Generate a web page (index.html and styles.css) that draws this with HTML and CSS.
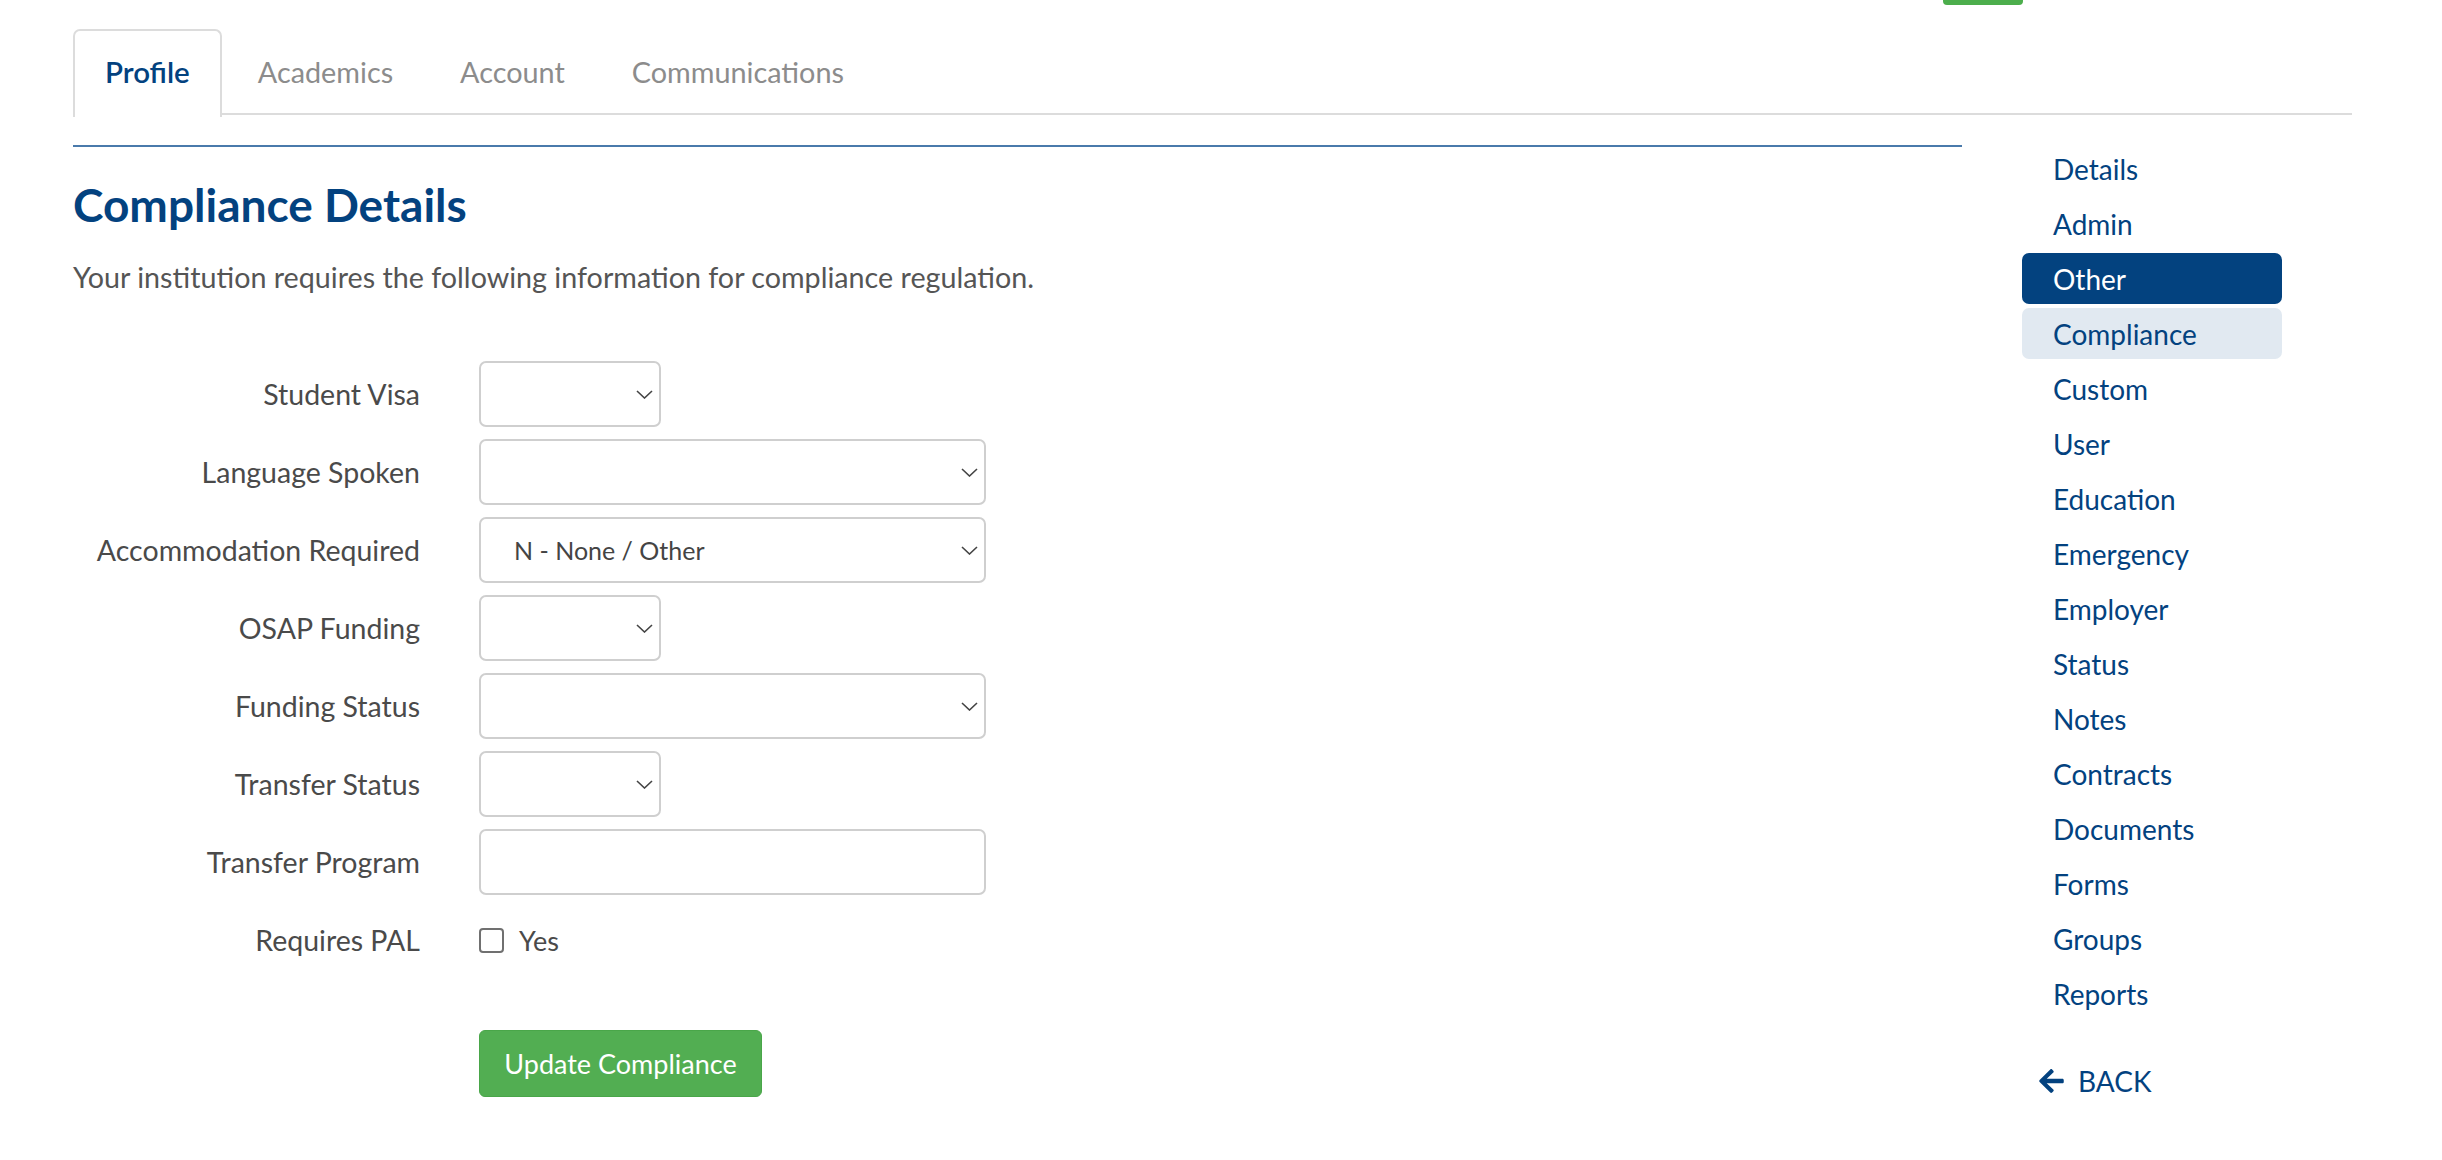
FILE: index.html
```html
<!DOCTYPE html>
<html lang="en">
<head>
<meta charset="utf-8">
<title>Compliance Details</title>
<link rel="stylesheet" href="styles.css">
</head>
<body>
<div class="page">
  <div class="topbar"><span class="green-stub"></span></div>
  <ul class="tabs">
    <li class="tab active">Profile</li>
    <li class="tab">Academics</li>
    <li class="tab">Account</li>
    <li class="tab">Communications</li>
  </ul>
  <div class="main">
    <div class="content">
      <h1 class="title">Compliance Details</h1>
      <p class="intro">Your institution requires the following information for compliance regulation.</p>
      <form class="form">
        <div class="row">
          <label class="label">Student Visa</label>
          <div class="control"><span class="select-wrap small"><select class="select"><option></option></select><svg class="chev" viewBox="0 0 17 9"><path d="M1 1l7.5 7 7.5-7"/></svg></span></div>
        </div>
        <div class="row">
          <label class="label">Language Spoken</label>
          <div class="control"><span class="select-wrap wide"><select class="select"><option></option></select><svg class="chev" viewBox="0 0 17 9"><path d="M1 1l7.5 7 7.5-7"/></svg></span></div>
        </div>
        <div class="row">
          <label class="label">Accommodation Required</label>
          <div class="control"><span class="select-wrap wide"><select class="select"><option>N - None / Other</option></select><svg class="chev" viewBox="0 0 17 9"><path d="M1 1l7.5 7 7.5-7"/></svg></span></div>
        </div>
        <div class="row">
          <label class="label">OSAP Funding</label>
          <div class="control"><span class="select-wrap small"><select class="select"><option></option></select><svg class="chev" viewBox="0 0 17 9"><path d="M1 1l7.5 7 7.5-7"/></svg></span></div>
        </div>
        <div class="row">
          <label class="label">Funding Status</label>
          <div class="control"><span class="select-wrap wide"><select class="select"><option></option></select><svg class="chev" viewBox="0 0 17 9"><path d="M1 1l7.5 7 7.5-7"/></svg></span></div>
        </div>
        <div class="row">
          <label class="label">Transfer Status</label>
          <div class="control"><span class="select-wrap small"><select class="select"><option></option></select><svg class="chev" viewBox="0 0 17 9"><path d="M1 1l7.5 7 7.5-7"/></svg></span></div>
        </div>
        <div class="row">
          <label class="label">Transfer Program</label>
          <div class="control"><input class="text-input" type="text"></div>
        </div>
        <div class="row">
          <label class="label">Requires PAL</label>
          <div class="control check"><input class="checkbox" type="checkbox" id="pal"><label class="check-label" for="pal">Yes</label></div>
        </div>
        <div class="actions">
          <button class="btn" type="button">Update Compliance</button>
        </div>
      </form>
    </div>
    <nav class="sidebar">
      <ul class="side-list">
        <li class="side-item">Details</li>
        <li class="side-item">Admin</li>
        <li class="side-item active">Other</li>
        <li class="side-item current">Compliance</li>
        <li class="side-item">Custom</li>
        <li class="side-item">User</li>
        <li class="side-item">Education</li>
        <li class="side-item">Emergency</li>
        <li class="side-item">Employer</li>
        <li class="side-item">Status</li>
        <li class="side-item">Notes</li>
        <li class="side-item">Contracts</li>
        <li class="side-item">Documents</li>
        <li class="side-item">Forms</li>
        <li class="side-item">Groups</li>
        <li class="side-item">Reports</li>
      </ul>
      <div class="back">
        <svg class="back-icon" viewBox="0 0 448 512"><path d="M257.5 445.1l-22.2 22.2c-9.4 9.4-24.6 9.4-33.9 0L7 273c-9.4-9.4-9.4-24.6 0-33.9L201.4 44.7c9.4-9.4 24.6-9.4 33.9 0l22.2 22.2c9.5 9.5 9.3 25-.4 34.3L136.6 216H424c13.3 0 24 10.7 24 24v32c0 13.3-10.7 24-24 24H136.6l120.5 114.8c9.8 9.3 10 24.8.4 34.3z"/></svg>
        <span class="back-text">BACK</span>
      </div>
    </nav>
  </div>
</div>
</body>
</html>
```
FILE: styles.css
```css
* { box-sizing: border-box; }
html, body { margin: 0; padding: 0; background: #fff; }
body {
  font-family: Lato, "Liberation Sans", sans-serif;
  color: #4a4a4a;
  width: 2442px;
  height: 1160px;
  overflow: hidden;
}
.page { padding-left: 73px; }

.topbar { height: 29px; display: flex; align-items: flex-start; }
.green-stub {
  display: block;
  width: 80px;
  height: 5px;
  margin-left: 1870px;
  background: #4cae4c;
  border-radius: 0 0 4px 4px;
}

.tabs {
  list-style: none;
  margin: 0;
  padding: 0;
  width: 2279px;
  height: 86px;
  display: flex;
  border-bottom: 2px solid #dcdcdc;
}
.tab {
  height: 86px;
  padding: 0 30px 3px;
  margin-right: 3px;
  font-size: 28.8px;
  color: #8c8c8c;
  display: flex;
  align-items: center;
  border: 2px solid transparent;
  border-bottom: none;
  border-radius: 7px 7px 0 0;
}
.tab.active {
  color: #03427f;
  font-weight: 600;
  font-size: 29.5px;
  padding: 0 30px 6px;
  margin-right: 4px;
  border-color: #dcdcdc;
  background: #fff;
  height: 88px;
}

.main { display: flex; align-items: flex-start; margin-top: 30px; }
.content {
  width: 1889px;
  border-top: 2px solid #4a7aab;
}
.title {
  margin: 30px 0 0;
  font-size: 46px;
  font-weight: 700;
  color: #03427f;
  line-height: 56px;
}
.intro {
  margin: 26px 0 0;
  font-size: 28.7px;
  color: #555;
  line-height: 36px;
}

.form { margin-top: 66px; }
.row {
  display: grid;
  grid-template-columns: 347px 1fr;
  column-gap: 59px;
  align-items: center;
  height: 66px;
  margin-bottom: 12px;
}
.label {
  text-align: right;
  font-size: 28.5px;
  color: #4a4a4a;
}
.control { display: flex; align-items: center; }
.select-wrap { position: relative; display: block; height: 66px; }
.select-wrap.small { width: 182px; }
.select-wrap.wide { width: 507px; }
.select {
  appearance: none;
  -webkit-appearance: none;
  width: 100%;
  height: 66px;
  border: 2px solid #cfcfcf;
  border-radius: 7px;
  background: #fff;
  font-family: inherit;
  font-size: 25px;
  color: #444;
  padding: 0 40px 0 33px;
}
.chev {
  position: absolute;
  right: 8px;
  top: 29px;
  width: 17px;
  height: 9px;
  fill: none;
  stroke: #444;
  stroke-width: 1.6;
}
.text-input {
  width: 507px;
  height: 66px;
  border: 2px solid #cfcfcf;
  border-radius: 7px;
  font-family: inherit;
  font-size: 25px;
  padding: 0 16px;
}
.check { gap: 15px; }
.checkbox {
  appearance: none;
  -webkit-appearance: none;
  width: 25px;
  height: 25px;
  margin: 0;
  border: 2px solid #707070;
  border-radius: 4px;
  background: #fff;
}
.check-label { font-size: 27px; color: #4a4a4a; }

.actions { padding-left: 406px; margin-top: 57px; }
.btn {
  width: 283px;
  height: 67px;
  background: #52ae52;
  border: 1px solid #49a649;
  border-radius: 6px;
  color: #fff;
  font-family: inherit;
  font-size: 27px;
  padding: 0;
}

.sidebar { margin-left: 60px; width: 260px; margin-top: -2px; }
.side-list { list-style: none; margin: 0; padding: 0; }
.side-item {
  height: 51px;
  margin-bottom: 4px;
  padding-left: 31px;
  display: flex;
  align-items: center;
  font-size: 28px;
  color: #03427f;
  border-radius: 7px;
}
.side-item.active { background: #03427f; color: #fff; }
.side-item.current { background: #e1e9f1; }
.back {
  display: flex;
  align-items: center;
  margin-top: 42px;
  padding-left: 17px;
  height: 40px;
}
.back-icon { width: 25px; height: 28px; fill: #03427f; }
.back-text { margin-left: 14px; font-size: 28px; color: #03427f; }
```
